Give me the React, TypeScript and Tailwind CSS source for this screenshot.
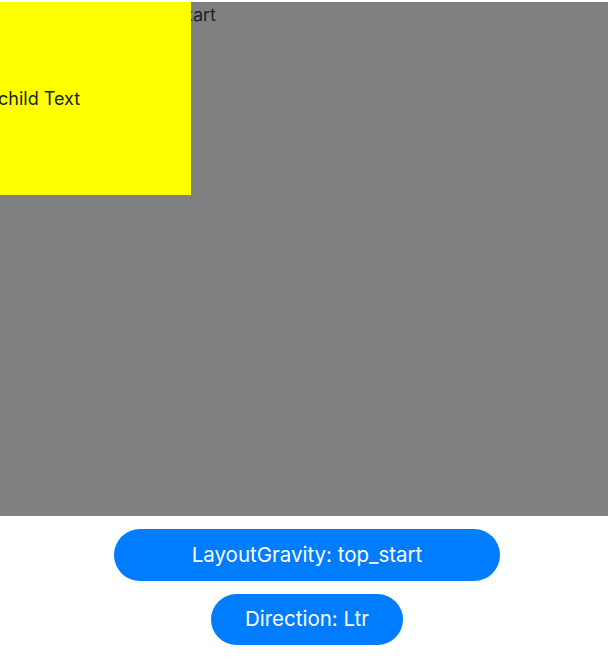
export default function App() {
  return (
    <div className="flex h-[660px] w-[608px] flex-col bg-white font-['Inter',sans-serif]">
      {/* Stack canvas */}
      <div className="relative mt-[2px] h-[514px] w-full bg-[#808080]">
        <div className="absolute left-0 top-0 w-[216px] text-right text-[18px] leading-[26px] text-[#182431]">
          top_start
        </div>
        <div className="relative flex h-[193px] w-[191px] items-center bg-[#ffff00]">
          <span className="ml-[-2px] whitespace-nowrap text-[18px] text-[#182431]">child Text</span>
        </div>
      </div>

      {/* Controls */}
      <div className="ml-[6px] flex flex-col items-center gap-[13px] pt-[13px]">
        <button
          type="button"
          className="flex h-[52px] w-[386px] items-center justify-center rounded-full bg-[#007dff] text-[20.5px] text-white"
        >
          LayoutGravity: top_start
        </button>
        <button
          type="button"
          className="flex h-[51px] w-[192px] items-center justify-center rounded-full bg-[#007dff] text-[20.5px] text-white"
        >
          Direction: Ltr
        </button>
      </div>
    </div>
  )
}
